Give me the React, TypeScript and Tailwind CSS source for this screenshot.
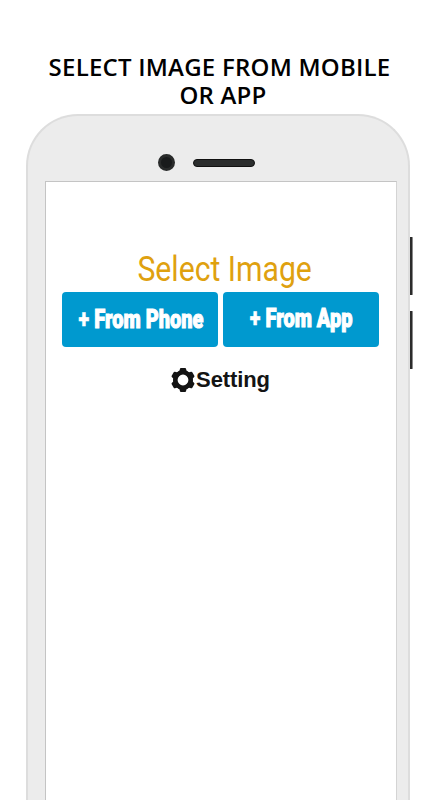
import React from "react";

const TEETH = [0, 60, 120, 180, 240, 300];

function GearIcon() {
  return (
    <svg viewBox="0 0 24 24" className="h-[24px] w-[24px] shrink-0" fill="#141414">
      <circle cx="12" cy="12" r="7.7" fill="none" stroke="#141414" strokeWidth="4.6" />
      {TEETH.map((angle) => (
        <path
          key={angle}
          transform={`rotate(${angle} 12 12)`}
          d="M10 0.1h4q1 0 1.1 1l.3 1.4q.3 1 1.6 1.6l-1 2h-8l-1-2q1.300-.6 1.600-1.600l.3-1.400q.1-1 1.100-1z"
        />
      ))}
    </svg>
  );
}

function SourceButton({ label, className }: { label: string; className: string }) {
  return (
    <button className="flex h-[55px] w-[156px] items-center justify-center rounded-[4px] bg-[#0099cf]">
      <span
        className={`flex shrink-0 translate-x-px scale-x-[0.8] whitespace-pre font-['Roboto','Liberation_Sans',sans-serif] text-[25px] font-black leading-none text-white ${className}`}
      >
        <span className="[-webkit-text-stroke:0.4px_white]">+ </span>
        <span className="[-webkit-text-stroke:1px_white]">{label}</span>
      </span>
    </button>
  );
}

function Screen() {
  return (
    <div className="flex flex-1 flex-col items-center border border-b-0 border-[#c4c4c4] border-r-[#d4d4d4] bg-white pr-[2px] pt-[67px]">
      <h2 className="origin-center translate-x-[4.5px] scale-x-[0.862] whitespace-nowrap font-['Roboto','Liberation_Sans',sans-serif] text-[35px] leading-[41px] text-[#dfa10f]">
        Select Image
      </h2>
      <div className="mt-[2px] flex gap-[5px]">
        <SourceButton label="From Phone" className="" />
        <SourceButton label="From App" className="-translate-y-px" />
      </div>
      <div className="mt-[19px] flex items-center gap-[1px] pl-[1px]">
        <GearIcon />
        <span className="font-['Liberation_Sans',sans-serif] text-[22px] font-bold leading-[28px] tracking-[-0.1px] text-[#141414]">
          Setting
        </span>
      </div>
    </div>
  );
}

export default function App() {
  return (
    <div className="flex h-[800px] w-[444px] flex-col overflow-hidden bg-white">
      <h1 className="flex h-[114px] shrink-0 flex-col items-center pr-[5px] pt-[53px] font-['Open_Sans','Noto_Sans',sans-serif] text-[24px] font-semibold leading-[28px] text-black">
        <span className="whitespace-nowrap tracking-[0.23px]">SELECT IMAGE FROM MOBILE</span>
        <span className="whitespace-nowrap pl-[7px] tracking-[0.2px]">OR APP</span>
      </h1>
      <div className="flex flex-1 pl-[26px]">
        <div className="flex w-[384px] flex-col rounded-t-[52px] border-2 border-b-0 border-[#dddddd] bg-[#ececec] pl-[17px] pr-[11px]">
          <div className="flex h-[65px] items-start pl-[113px] pt-[38px]">
            <div className="h-[17px] w-[17px] rounded-full border-[3px] border-[#292b2b] bg-[#191b1c]" />
            <div className="ml-[18px] mt-[5px] h-[8px] w-[62px] rounded-full border border-[#111] bg-[#2b2d2d]" />
          </div>
          <Screen />
        </div>
        <div className="flex flex-col gap-[16px] pt-[123px]">
          <div className="h-[58px] w-[3px] rounded-r-[1px] border-r border-[#8a8a8a] bg-[#2b2b2b]" />
          <div className="h-[58px] w-[3px] rounded-r-[1px] border-r border-[#8a8a8a] bg-[#2b2b2b]" />
        </div>
      </div>
    </div>
  );
}
